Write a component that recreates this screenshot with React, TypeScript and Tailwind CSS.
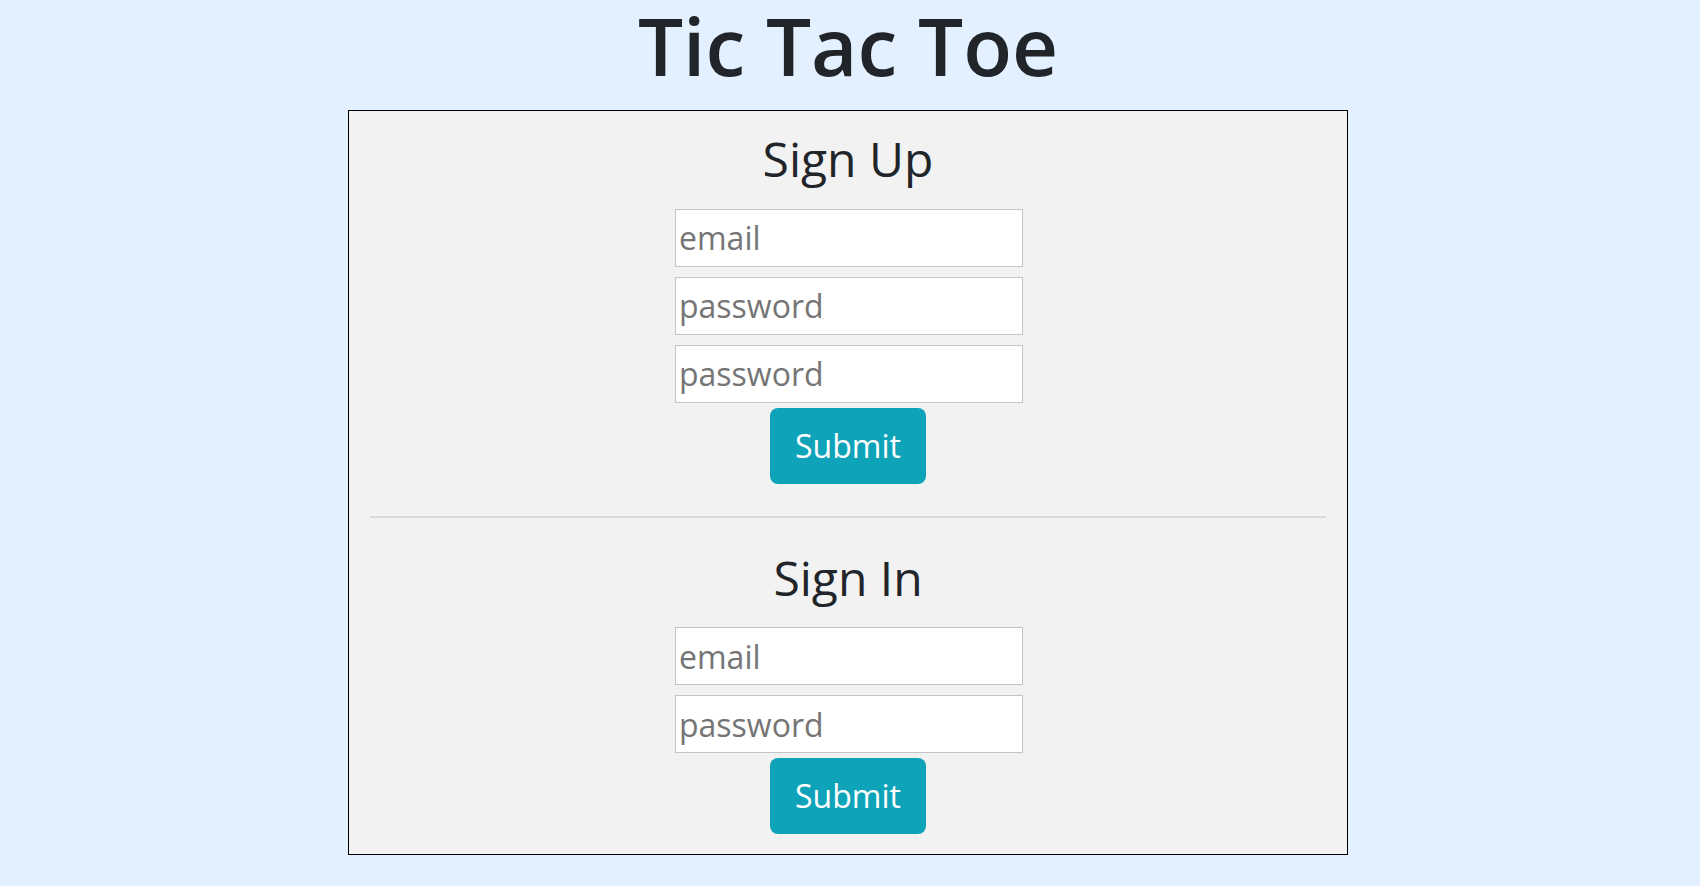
import React from 'react';

function AuthForm({ title, fields }: { title: string; fields: string[] }) {
	return (
		<form className="flex flex-col items-center" onSubmit={(e) => e.preventDefault()}>
			<h2 className="text-[48px] font-normal leading-[57.6px] text-[#212529]">{title}</h2>
			<div className="mt-[21px] flex flex-col gap-[10px] pl-[2px]">
				{fields.map((f, i) => (
					<input
						key={i}
						type={f === 'email' ? 'email' : 'password'}
						placeholder={f}
						className="h-[58px] w-[348px] border border-[#c4c4c4] bg-white px-[3px] text-[32px] text-[#212529] placeholder:text-[#757575] focus:outline-none"
					/>
				))}
			</div>
			<button
				type="submit"
				className="mt-[5px] h-[76px] w-[156px] rounded-[8px] bg-[#0fa3b9] text-[32px] text-white"
			>
				Submit
			</button>
		</form>
	);
}

export default function App() {
	return (
		<div
			className="min-h-[886px] bg-[#e3f0ff] pr-[4px]"
			style={{ fontFamily: '"Open Sans", "Noto Sans", sans-serif' }}
		>
			<h1 className="mb-[20px] text-center text-[80px] font-semibold leading-[90px] text-[#212529]">
				Tic Tac Toe
			</h1>
			<div className="mx-auto w-[1000px] border border-black bg-[#f2f2f2] pt-[19px] pb-[20px]">
				<AuthForm title="Sign Up" fields={['email', 'password', 'password']} />
				<hr className="mx-[21px] mt-[32px] mb-[31px] border-t-2 border-[#d9d9d9]" />
				<AuthForm title="Sign In" fields={['email', 'password']} />
			</div>
		</div>
	);
}
